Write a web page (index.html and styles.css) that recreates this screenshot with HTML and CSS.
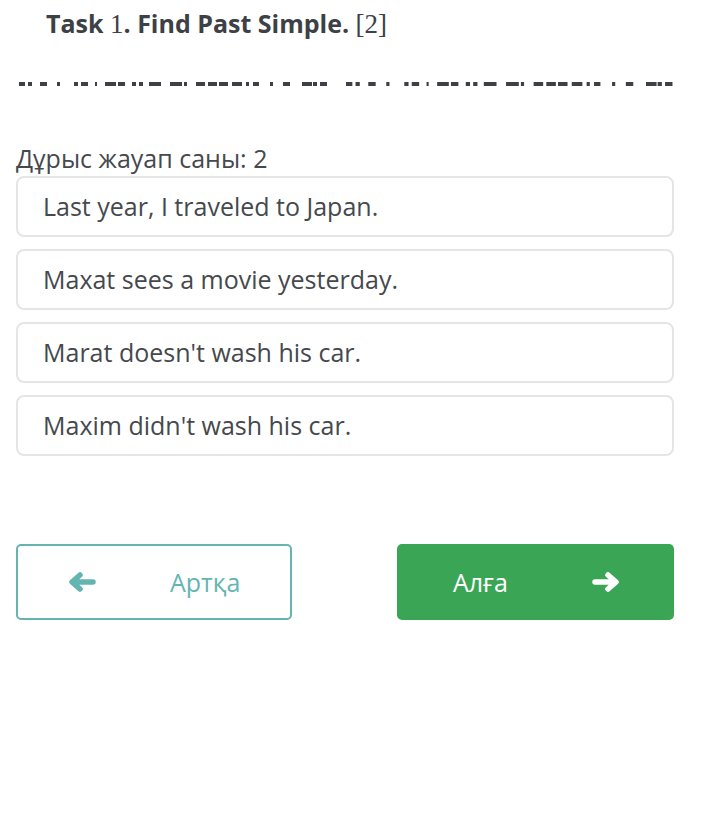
FILE: index.html
```html
<!DOCTYPE html>
<html lang="kk">
<head>
    <meta charset="UTF-8">
    <meta name="viewport" content="width=device-width, initial-scale=1.0">
    <title>Task 1. Find Past Simple.</title>
    <link rel="stylesheet" href="styles.css">
</head>
<body>
    <div class="page">
        <h2 class="task-title">Task <span class="num">1</span>. Find Past Simple. <span class="num">[2]</span></h2>

        <!-- clipped line of the question text, only the bottoms show -->
        <svg class="cut-line" width="672" height="6" viewBox="0 0 672 6" id="cut-line"></svg>

        <div class="answer-count">Дұрыс жауап саны: 2</div>

        <div class="options">
            <div class="option">Last year, I traveled to Japan.</div>
            <div class="option">Maxat sees a movie yesterday.</div>
            <div class="option">Marat doesn't wash his car.</div>
            <div class="option">Maxim didn't wash his car.</div>
        </div>

        <div class="nav">
            <button class="btn btn-back">
                <svg class="arrow" width="28" height="20" viewBox="0 0 28 20">
                    <path d="M25 10H5M12 3L4 10L12 17" fill="none" stroke="currentColor" stroke-width="5.5" stroke-linecap="round" stroke-linejoin="round"/>
                </svg>
                <span>Артқа</span>
            </button>
            <button class="btn btn-next">
                <span>Алға</span>
                <svg class="arrow" width="28" height="20" viewBox="0 0 28 20">
                    <path d="M3 10H23M16 3L24 10L16 17" fill="none" stroke="currentColor" stroke-width="5.5" stroke-linecap="round" stroke-linejoin="round"/>
                </svg>
            </button>
        </div>
    </div>
    <script>
        // Dash pattern of the clipped text line, drawn twice
        const dashes = [[19,25],[28,32],[40,47],[57,60],[74,78],[81,88],[95,97],[105,116],[118,125],
            [132,136],[139,143],[149,161],[170,182],[184,187],[196,205],[208,217],[219,228],[232,242],
            [246,249],[253,259],[270,273],[283,290],[302,312],[313,317],[320,327]];
        const line = document.getElementById('cut-line');
        [[19, 1.0], [346, 1.06]].forEach(([start, scale]) => {
            dashes.forEach(([a, b]) => {
                const r = document.createElementNS('http://www.w3.org/2000/svg', 'rect');
                r.setAttribute('x', start + (a - 19) * scale - 16);
                r.setAttribute('y', 1);
                r.setAttribute('width', (b - a) * scale);
                r.setAttribute('height', 4);
                r.setAttribute('fill', '#3d4045');
                line.appendChild(r);
            });
        });
    </script>
</body>
</html>
```

FILE: styles.css
```css
body {
    margin: 0;
    background: #ffffff;
    font-family: 'Open Sans', 'Noto Sans', sans-serif;
    color: #45494d;
}
.page {
    width: 658px;
    padding: 0 0 0 16px;
}
.task-title {
    margin: 0;
    padding: 6px 0 0 30px;
    font-size: 25px;
    line-height: 34px;
    font-weight: 700;
    color: #3d4045;
}
.task-title .num {
    font-family: 'Liberation Serif', serif;
    font-weight: 400;
    font-size: 27px;
}
.cut-line {
    display: block;
    margin: 40px 0 0 0;
}
.answer-count {
    margin-top: 56px;
    font-size: 25px;
    line-height: 30px;
    color: #45494d;
}
.options {
    display: flex;
    flex-direction: column;
    gap: 12px;
    margin-top: 3px;
}
.option {
    border: 2px solid #e3e5e7;
    border-radius: 8px;
    padding: 14px 25px;
    font-size: 25px;
    line-height: 29px;
    color: #45494d;
}
.nav {
    display: flex;
    justify-content: space-between;
    margin-top: 88px;
}
.btn {
    display: flex;
    align-items: center;
    height: 76px;
    border-radius: 5px;
    font-family: 'Open Sans', 'Noto Sans', sans-serif;
    font-size: 25px;
    cursor: pointer;
}
.btn-back {
    width: 276px;
    background: #ffffff;
    border: 2px solid #64b5b2;
    color: #64b5b2;
    padding: 0 0 0 50px;
    gap: 74px;
}
.btn-next {
    width: 277px;
    background: #3ba556;
    border: 2px solid #3ba556;
    color: #ffffff;
    padding: 0 0 0 54px;
    gap: 84px;
}
.arrow {
    display: block;
    flex-shrink: 0;
}
```
